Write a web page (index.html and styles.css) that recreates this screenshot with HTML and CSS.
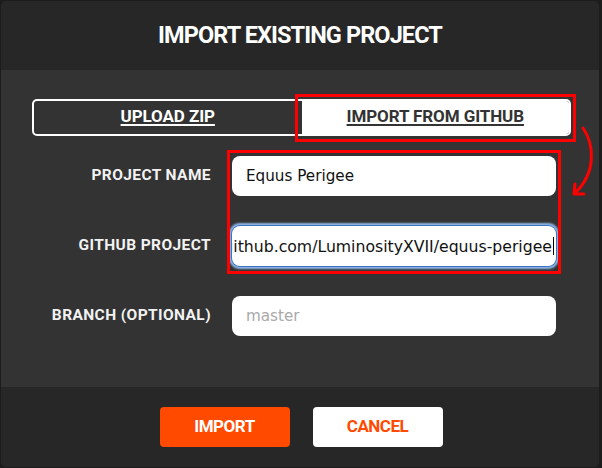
FILE: index.html
```html
<!DOCTYPE html>
<html>
<head>
<meta charset="utf-8">
<link rel="stylesheet" href="styles.css">
</head>
<body>
<div class="dialog">
  <header class="dlg-head">
    <h1 class="title">IMPORT EXISTING PROJECT</h1>
  </header>
  <section class="dlg-body">
    <div class="tabs">
      <div class="tab"><span>UPLOAD ZIP</span></div>
      <div class="tab active"><span>IMPORT FROM GITHUB</span></div>
    </div>
    <div class="form">
      <div class="label">PROJECT NAME</div>
      <div class="field"><span class="val">Equus Perigee</span></div>
      <div class="label">GITHUB PROJECT</div>
      <div class="field focus"><span class="val">github.com/LuminosityXVII/equus-perigee</span><span class="caret"></span></div>
      <div class="label">BRANCH (OPTIONAL)</div>
      <div class="field"><span class="ph">master</span></div>
    </div>
  </section>
  <footer class="dlg-foot">
    <button class="btn primary">IMPORT</button>
    <button class="btn secondary">CANCEL</button>
  </footer>
  <div class="mark mark-tab"></div>
  <div class="mark mark-fields"></div>
  <svg class="arrow" width="40" height="80" viewBox="0 0 40 80">
    <path d="M11 6 C22 22 25 50 3 71" fill="none" stroke="#ff0000" stroke-width="3" stroke-linecap="round"/>
    <path d="M3 62 L2 72 L12 72" fill="none" stroke="#ff0000" stroke-width="3" stroke-linecap="round" stroke-linejoin="round"/>
  </svg>
</div>
</body>
</html>
```
FILE: styles.css
```css
* { box-sizing: border-box; }
html, body { margin: 0; padding: 0; }
body {
  background: #1c1c1c;
  width: 602px;
  height: 468px;
  overflow: hidden;
  font-family: Roboto, "Liberation Sans", sans-serif;
}
.dialog {
  position: relative;
  margin: 1px 0 0 1px;
  width: 598px;
  height: 466px;
  border-radius: 6px;
  overflow: hidden;
  display: flex;
  flex-direction: column;
  background: #333333;
}
.dlg-head {
  height: 69px;
  background: #272727;
  display: flex;
  align-items: center;
  justify-content: center;
}
.title {
  margin: 0 0 2px 0;
  color: #ffffff;
  font-size: 23.5px;
  font-weight: 700;
  letter-spacing: -0.9px;
}
.dlg-body {
  height: 317px;
  padding: 29px 0 0 31px;
}
.tabs {
  width: 539px;
  height: 37px;
  border: 2px solid #ffffff;
  border-radius: 5px;
  display: flex;
  overflow: hidden;
}
.tab {
  flex: 1;
  display: flex;
  align-items: center;
  justify-content: center;
  color: #ffffff;
  font-size: 17px;
  font-weight: 700;
  letter-spacing: -0.1px;
  padding-bottom: 3px;
}
.tab span {
  text-decoration: underline;
  text-underline-offset: 2px;
  text-decoration-thickness: 1.5px;
}
.tab.active {
  background: #ffffff;
  color: #333333;
}
.form {
  margin-top: 20px;
  display: grid;
  grid-template-columns: 179px 324px;
  column-gap: 21px;
  row-gap: 30px;
}
.label {
  text-align: right;
  align-self: center;
  color: #f2f2f2;
  font-size: 15.5px;
  font-weight: 700;
  letter-spacing: 0.4px;
  padding-bottom: 2px;
}
.field {
  height: 40px;
  background: #ffffff;
  border-radius: 8px;
  display: flex;
  align-items: center;
  padding: 0 14px;
  font-family: "DejaVu Sans", sans-serif;
  font-size: 15.2px;
  color: #111111;
  white-space: nowrap;
  overflow: hidden;
}
.field.focus {
  justify-content: flex-end;
  padding: 0 2px 0 4px;
  font-size: 15.7px;
  box-shadow: 0 0 0 1px #3b74c4, 0 0 2px 3px #8db6e6;
  overflow: hidden;
}
.caret {
  display: inline-block;
  flex: none;
  width: 1px;
  height: 18px;
  background: #000000;
  margin-left: 1px;
}
.ph { color: #a9a9a9; }
.dlg-foot {
  flex: 1;
  background: #272727;
  display: flex;
  justify-content: center;
  align-items: flex-start;
  padding-top: 20px;
  padding-left: 2px;
  gap: 23px;
}
.btn {
  width: 130px;
  height: 40px;
  border: none;
  border-radius: 4px;
  font-family: Roboto, "Liberation Sans", sans-serif;
  font-size: 17px;
  font-weight: 700;
  letter-spacing: -0.5px;
  padding: 0 0 2px 0;
}
.btn.primary { background: #ff4a00; color: #ffffff; }
.btn.secondary { background: #ffffff; color: #ff4a00; }
.mark {
  position: absolute;
  border: 3px solid #ff0000;
}
.mark-tab { left: 294px; top: 93px; width: 281px; height: 48px; }
.mark-fields { left: 226px; top: 149px; width: 334px; height: 124px; }
.arrow { position: absolute; left: 571px; top: 121px; }
```
